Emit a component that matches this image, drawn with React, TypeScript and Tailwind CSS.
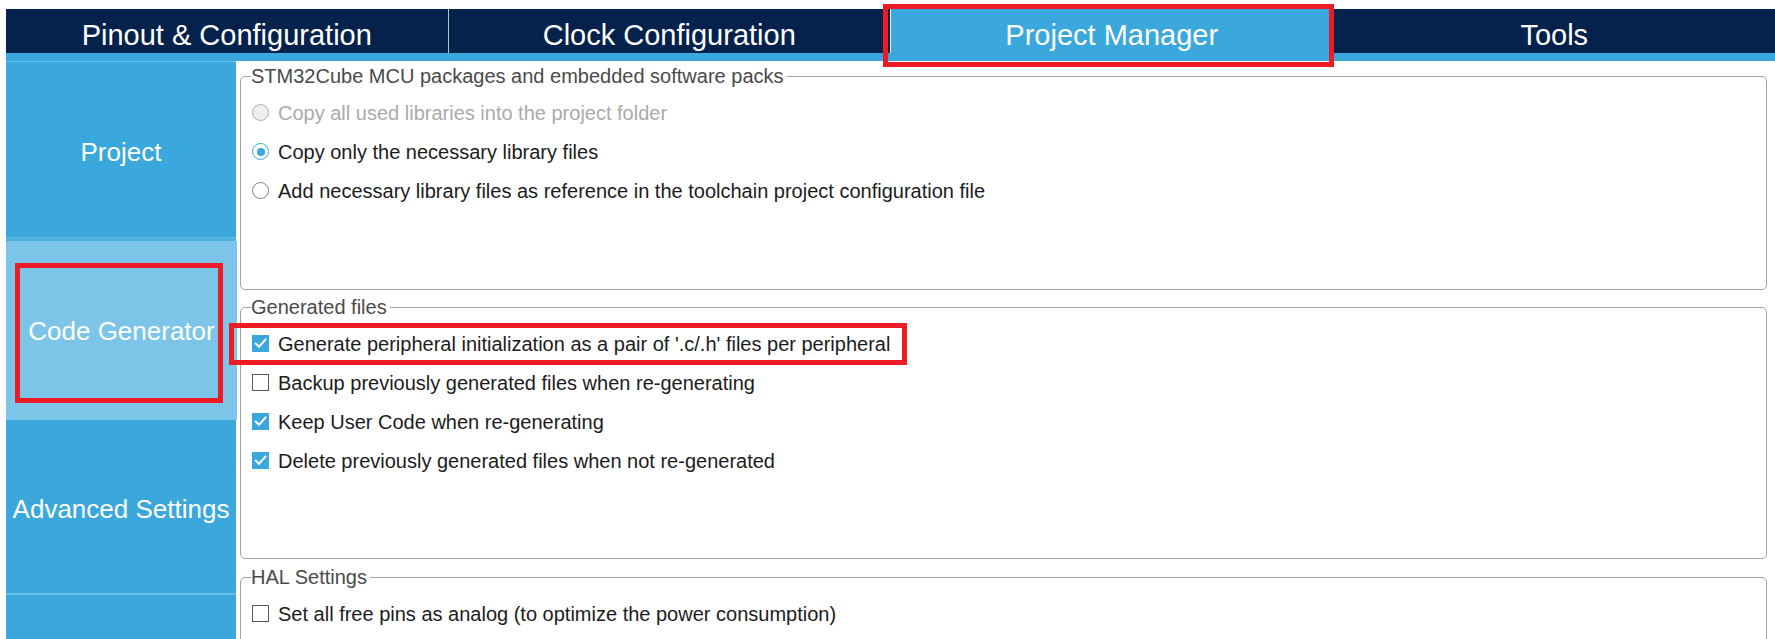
import React from "react";

type Option = {
  label: string;
  kind: "radio" | "check";
  checked?: boolean;
  disabled?: boolean;
};

const tabs = [
  { label: "Pinout & Configuration", active: false },
  { label: "Clock Configuration", active: false },
  { label: "Project Manager", active: true },
  { label: "Tools", active: false },
];

const packOptions: Option[] = [
  { label: "Copy all used libraries into the project folder", kind: "radio", disabled: true },
  { label: "Copy only the necessary library files", kind: "radio", checked: true },
  {
    label: "Add necessary library files as reference in the toolchain project configuration file",
    kind: "radio",
  },
];

const generatedOptions: Option[] = [
  {
    label: "Generate peripheral initialization as a pair of '.c/.h' files per peripheral",
    kind: "check",
    checked: true,
  },
  { label: "Backup previously generated files when re-generating", kind: "check" },
  { label: "Keep User Code when re-generating", kind: "check", checked: true },
  { label: "Delete previously generated files when not re-generated", kind: "check", checked: true },
];

function Radio({ checked, disabled }: { checked?: boolean; disabled?: boolean }) {
  if (disabled) {
    return <span className="h-[17px] w-[17px] shrink-0 rounded-full border border-[#a9adb1] bg-[#eceef0]" />;
  }
  return (
    <span
      className={`flex h-[17px] w-[17px] shrink-0 items-center justify-center rounded-full border bg-white ${
        checked ? "border-[#3aa8dc]" : "border-[#7b7f83]"
      }`}
    >
      {checked && <span className="h-[8px] w-[8px] rounded-full bg-[#3aa8dc]" />}
    </span>
  );
}

function Checkbox({ checked }: { checked?: boolean }) {
  if (!checked) {
    return <span className="h-[17px] w-[17px] shrink-0 border-[1.5px] border-[#585858] bg-white" />;
  }
  return (
    <span className="flex h-[17px] w-[17px] shrink-0 items-center justify-center bg-[#3aa8dc]">
      <svg width="17" height="17" viewBox="0 0 17 17" fill="none">
        <path d="M3.8 8.6 L7 11.8 L13.4 4.6" stroke="white" strokeWidth="2" strokeLinecap="square" />
      </svg>
    </span>
  );
}

function OptionRow({ opt, highlight }: { opt: Option; highlight?: boolean }) {
  return (
    <div className="relative flex h-[39px] items-center gap-[9px]">
      {opt.kind === "radio" ? (
        <Radio checked={opt.checked} disabled={opt.disabled} />
      ) : (
        <Checkbox checked={opt.checked} />
      )}
      <span className={`whitespace-nowrap text-[20px] leading-[20px] ${opt.disabled ? "text-[#aaaaaa]" : "text-[#1c1c1c]"}`}>
        {opt.label}
      </span>
      {highlight && (
        <div className="pointer-events-none absolute left-[-23px] top-[-1px] h-[42px] w-[678px] border-[5px] border-[#ed1c24]" />
      )}
    </div>
  );
}

function Group({
  title,
  className,
  children,
}: {
  title: string;
  className: string;
  children: React.ReactNode;
}) {
  return (
    <fieldset className={`shrink-0 rounded-[5px] border border-[#9ea3a8] pl-[11px] ${className}`}>
      <legend className="ml-[-1px] pr-[3px] text-[20px] leading-[20px] text-[#4a4a4a]">{title}</legend>
      <div className="flex flex-col pt-[7px]">{children}</div>
    </fieldset>
  );
}

export default function App() {
  return (
    <div className="h-[639px] w-[1775px] overflow-hidden bg-white pt-[9px] font-['Liberation_Sans',Arial,sans-serif]">
      {/* top tabs */}
      <div className="relative ml-[6px]">
        <div className="flex h-[44px] bg-[#04224b]">
          {tabs.map((t, i) => (
            <div
              key={t.label}
              className={`flex flex-1 items-center justify-center pt-[9px] text-[29px] leading-[29px] text-white ${
                t.active ? "border-l border-r border-l-[#e6f4fb] border-r-[#6cc0e8] bg-[#3aa8dc]" : ""
              } ${i === 1 ? "border-l border-[#b8c2cc]" : ""}`}
            >
              {t.label}
            </div>
          ))}
        </div>
        <div className="h-[8px] bg-[#3aa8dc]" />
        <div className="pointer-events-none absolute left-[877px] top-[-5px] h-[63px] w-[451px] border-[5px] border-[#ed1c24]" />
      </div>

      <div className="ml-[6px] flex h-[578px] overflow-hidden">
        {/* side menu */}
        <div className="flex w-[230px] shrink-0 flex-col bg-[#3aa8dc] text-[26px] leading-[26px] text-white">
          <div className="h-[1px] bg-[#6cc0e8]" />
          <div className="flex h-[175px] items-center justify-center pt-[4px]">Project</div>
          <div className="h-[2px] bg-[#5cb6e2]" />
          <div className="h-[2px] bg-[#4aafdf]" />
          <div className="relative flex h-[179px] w-[231px] items-center justify-center bg-[#7cc5e9]">
            Code Generator
            <div className="pointer-events-none absolute left-[9px] top-[22px] h-[140px] w-[208px] border-[5px] border-[#ed1c24]" />
          </div>
          <div className="flex h-[173px] items-center justify-center pt-[5px]">Advanced Settings</div>
          <div className="h-[2px] bg-[#6cc0e8]" />
          <div className="flex-1" />
        </div>

        {/* content */}
        <div className="flex min-w-0 flex-1 flex-col pl-[4px] pr-[8px] pt-[5px]">
          <Group title="STM32Cube MCU packages and embedded software packs" className="h-[224px]">
            {packOptions.map((o) => (
              <OptionRow key={o.label} opt={o} />
            ))}
          </Group>
          <Group title="Generated files" className="mt-[7px] h-[262px]">
            {generatedOptions.map((o, i) => (
              <OptionRow key={o.label} opt={o} highlight={i === 0} />
            ))}
          </Group>
          <Group title="HAL Settings" className="mt-[8px] h-[200px]">
            <OptionRow
              opt={{ label: "Set all free pins as analog (to optimize the power consumption)", kind: "check" }}
            />
          </Group>
        </div>
      </div>
    </div>
  );
}
